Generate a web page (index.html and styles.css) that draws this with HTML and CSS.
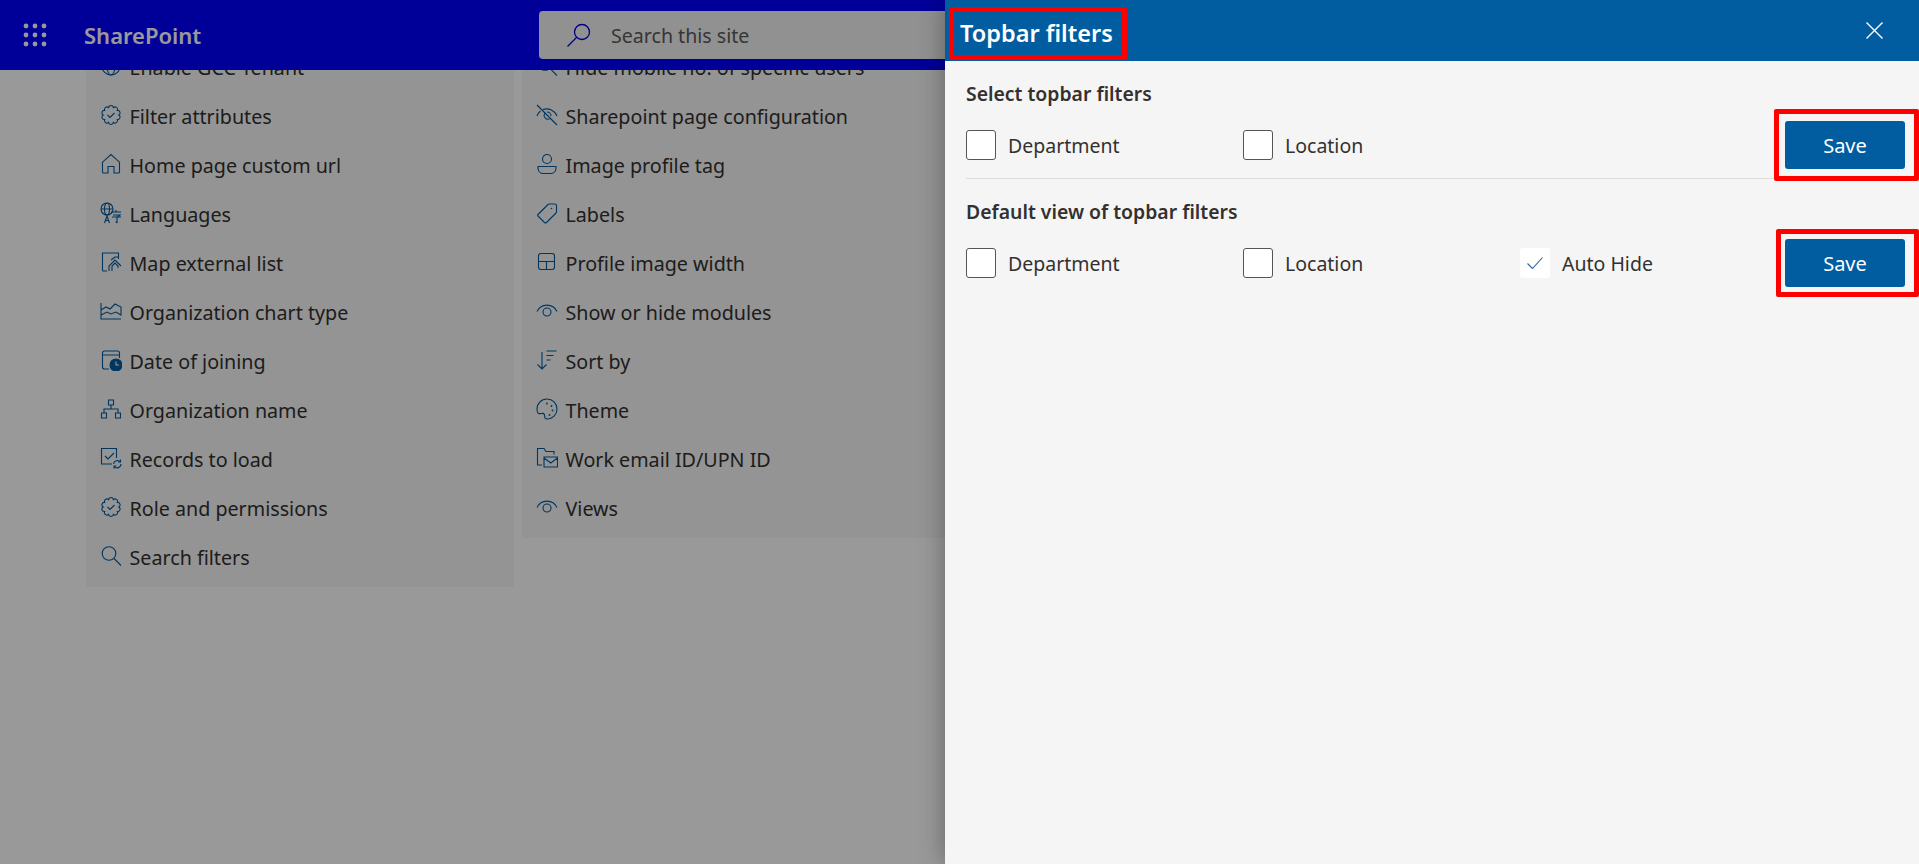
FILE: index.html
```html
<!DOCTYPE html>
<html lang="en">
  <head>
    <meta charset="UTF-8" />
    <meta name="viewport" content="width=device-width, initial-scale=1.0" />
    <title>Topbar filters</title>
    <link rel="stylesheet" href="styles.css">
  </head>
  <body>
    <header class="topbar">
      <svg class="waffle" width="24" height="24" viewBox="0 0 24 24">
        <circle cx="3" cy="3" r="2.4"/><circle cx="12" cy="3" r="2.4"/><circle cx="21" cy="3" r="2.4"/>
        <circle cx="3" cy="12" r="2.4"/><circle cx="12" cy="12" r="2.4"/><circle cx="21" cy="12" r="2.4"/>
        <circle cx="3" cy="21" r="2.4"/><circle cx="12" cy="21" r="2.4"/><circle cx="21" cy="21" r="2.4"/>
      </svg>
      <span class="brand">SharePoint</span>
      <div class="search">
        <svg width="26" height="26" viewBox="0 0 26 26" fill="none" stroke="#0000e0" stroke-width="1.3">
          <circle cx="16" cy="10" r="7.5"/><path d="M10.5 15.5 1.5 24.5"/>
        </svg>
        <span>Search this site</span>
      </div>
    </header>

    <main class="settings">
      <ul class="card">
        <li><svg class="ico" viewBox="0 0 22 22"><circle cx="11" cy="11" r="9"/><ellipse cx="11" cy="11" rx="4" ry="9"/><path d="M2 11h18"/></svg>Enable GCC Tenant</li>
        <li><svg class="ico" viewBox="0 0 22 22"><path d="M18.8 11A2.45 2.45 0 0 1 17.31 15.58 2.45 2.45 0 0 1 13.41 18.42 2.45 2.45 0 0 1 8.59 18.42 2.45 2.45 0 0 1 4.69 15.58 2.45 2.45 0 0 1 3.2 11 2.45 2.45 0 0 1 4.69 6.42 2.45 2.45 0 0 1 8.59 3.58 2.45 2.45 0 0 1 13.41 3.58 2.45 2.45 0 0 1 17.31 6.42 2.45 2.45 0 0 1 18.8 11z"/><path d="M7.500 11l2.500 2.500 4.500-4.500"/></svg>Filter attributes</li>
        <li><svg class="ico" viewBox="0 0 22 22"><path d="M2.5 19V9.2L11 1.5l8.500 7.700V19a1 1 0 0 1-1 1H14v-6.500H8V20H3.500a1 1 0 0 1-1-1z"/></svg>Home page custom url</li>
        <li><svg class="ico" viewBox="0 0 22 22"><circle cx="7" cy="7" r="6"/><ellipse cx="7" cy="7" rx="2.500" ry="6"/><path d="M1 7h12M11 10h10M16 8v2M13 13h7l-3 2.500M12 15h9M17 15.500v5l-1.500-.5"/><path d="M4.500 21l2.500-7 2.500 7M5.500 18.500h3"/></svg>Languages</li>
        <li><svg class="ico" viewBox="0 0 22 22"><path d="M7 20H3.500a1 1 0 0 1-1-1V2h16v6"/><path d="M9 20v-5l6-6 6 6M12 20v-5l3-3 3 3v2M15 6l-4 3M19 6h-4"/></svg>Map external list</li>
        <li><svg class="ico" viewBox="0 0 22 22"><path d="M1 3v16h20M1 10l5-3 4 2 5-5 6 3v8l-5-3-5 2-4-2-6 3"/></svg>Organization chart type</li>
        <li><svg class="ico" viewBox="0 0 22 22"><path d="M9 20H4.500a2 2 0 0 1-2-2V4a2 2 0 0 1 2-2h13a2 2 0 0 1 2 2v5M2.500 6h17"/><circle class="solid" cx="16" cy="16" r="6"/><path class="cut" d="M16 12.500V16h3"/></svg>Date of joining</li>
        <li><svg class="ico" viewBox="0 0 22 22"><path d="M8.500 2h5v5h-5zM1.500 15h5v5h-5zM15.500 15h5v5h-5zM11 7v4M4 15v-4h14v4"/></svg>Organization name</li>
        <li><svg class="ico" viewBox="0 0 22 22"><path d="M12 17H1.500V1.500h15V11M5 9l3 3 6-6"/><path d="M13.500 17a4 4 0 0 1 7-2M21 17a4 4 0 0 1-7 2.500M20.500 12.500V15h-2.500M14 21.500V19h2.500"/></svg>Records to load</li>
        <li><svg class="ico" viewBox="0 0 22 22"><path d="M18.8 11A2.45 2.45 0 0 1 17.31 15.58 2.45 2.45 0 0 1 13.41 18.42 2.45 2.45 0 0 1 8.59 18.42 2.45 2.45 0 0 1 4.69 15.58 2.45 2.45 0 0 1 3.2 11 2.45 2.45 0 0 1 4.69 6.42 2.45 2.45 0 0 1 8.59 3.58 2.45 2.45 0 0 1 13.41 3.58 2.45 2.45 0 0 1 17.31 6.42 2.45 2.45 0 0 1 18.8 11z"/><path d="M7.500 11l2.500 2.500 4.500-4.500"/></svg>Role and permissions</li>
        <li><svg class="ico" viewBox="0 0 22 22"><circle cx="9" cy="8.500" r="6.800"/><path d="M14 13.500l7 7"/></svg>Search filters</li>
      </ul>
      <ul class="card">
        <li><svg class="ico" viewBox="0 0 22 22"><circle cx="9" cy="8.500" r="6.800"/><path d="M14 13.500l7 7"/></svg>Hide mobile no. of specific users</li>
        <li><svg class="ico" viewBox="0 0 22 22"><path d="M1 1l20 20M4.500 7A12 12 0 0 0 1 12M21 12A11 11 0 0 0 7 5.500M8.500 9.500a4 4 0 0 0 5 5.500M11 8a4 4 0 0 1 4 4"/></svg>Sharepoint page configuration</li>
        <li><svg class="ico" viewBox="0 0 22 22"><circle cx="11" cy="6" r="4.500"/><path d="M2 13.500h18v2a5.500 5.500 0 0 1-5.500 5h-7A5.500 5.500 0 0 1 2 15.500z"/></svg>Image profile tag</li>
        <li><svg class="ico" viewBox="0 0 22 22"><path d="M2 12.500 12 2.500a1.500 1.500 0 0 1 1-.5h6a1.500 1.500 0 0 1 1.500 1.500V10a1.500 1.500 0 0 1-.5 1L10.500 20.500a1.500 1.500 0 0 1-2 0L2 14a1 1 0 0 1 0-1.500z"/><circle class="dot" cx="15.500" cy="6.500" r=".8"/></svg>Labels</li>
        <li><svg class="ico" viewBox="0 0 22 22"><rect x="2.500" y="2.500" width="16" height="16" rx="2.500"/><path d="M2.500 10.500h16M10.500 10.500v8"/></svg>Profile image width</li>
        <li><svg class="ico" viewBox="0 0 22 22"><path d="M1 11.500a11 11 0 0 1 20 0"/><circle cx="11" cy="12" r="4"/></svg>Show or hide modules</li>
        <li><svg class="ico" viewBox="0 0 22 22"><path d="M6 3v17M1.500 15.500 6 20l4.500-4.500M10.500 2h10M10.500 6.500h7M10.500 11h4"/></svg>Sort by</li>
        <li><svg class="ico" viewBox="0 0 22 22"><path d="M11 1a10 10 0 0 1 0 20c-3 0-2-2-2.500-4s-1.500-2-3.500-1.500-4 0-4-4A10 10 0 0 1 11 1z"/><circle class="dot" cx="11" cy="5.500" r=".9"/><circle class="dot" cx="15.500" cy="8" r=".9"/><circle class="dot" cx="16.500" cy="12.500" r=".9"/><circle class="dot" cx="13.500" cy="17" r=".9"/></svg>Theme</li>
        <li><svg class="ico" viewBox="0 0 22 22"><path d="M6 18H1.500V1.500H8l2 3h8v3"/><path d="M8 10h13.500v10H8zM8 11l6.750 5 6.750-5"/></svg>Work email ID/UPN ID</li>
        <li><svg class="ico" viewBox="0 0 22 22"><path d="M1 11.500a11 11 0 0 1 20 0"/><circle cx="11" cy="12" r="4"/></svg>Views</li>
      </ul>
    </main>

    <div class="overlay"></div>

    <aside class="panel">
      <div class="panel-head">
        <h1 class="panel-title">Topbar filters</h1>
        <svg class="close" width="17" height="17" viewBox="0 0 17 17" fill="none" stroke="#fff" stroke-width="1.4">
          <path d="M.5.500l16 16M16.500.500l-16 16"/>
        </svg>
      </div>

      <section class="block">
        <h2>Select topbar filters</h2>
        <div class="row">
          <div class="option"><span class="box"></span><span class="label">Department</span></div>
          <div class="option"><span class="box"></span><span class="label">Location</span></div>
          <button class="save frame-a">Save</button>
        </div>
      </section>

      <section class="block last">
        <h2>Default view of topbar filters</h2>
        <div class="row">
          <div class="option"><span class="box"></span><span class="label">Department</span></div>
          <div class="option"><span class="box"></span><span class="label">Location</span></div>
          <div class="option tight">
            <span class="box checked">
              <svg width="16" height="12" viewBox="0 0 16 12" fill="none" stroke="#2a62a0" stroke-width="1.1"><path d="M.5 6.500 5.500 11.500 15.500.500"/></svg>
            </span>
            <span class="label">Auto Hide</span>
          </div>
          <button class="save frame-b">Save</button>
        </div>
      </section>
    </aside>
  </body>
</html>
```

FILE: styles.css
```css
* {
  margin: 0;
  padding: 0;
  box-sizing: border-box;
}
body {
  height: 100vh;
  overflow: hidden;
  position: relative;
  background: #fff;
  color: #323130;
  font-family: "Noto Sans", "Liberation Sans", sans-serif;
}

/* top bar */
.topbar {
  height: 70px;
  background: #0000ff;
  display: flex;
  align-items: center;
  padding-left: 23px;
}
.waffle {
  fill: #fff;
}
.brand {
  margin-left: 37px;
  width: 455px;
  color: #fff;
  font-size: 22px;
  font-weight: 600;
}
.search {
  width: 600px;
  height: 48px;
  background: #f2f2f2;
  border-radius: 4px;
  display: flex;
  align-items: center;
  padding-left: 27px;
  gap: 19px;
  font-size: 19.6px;
  color: #5a5a5a;
}

/* settings list behind the panel */
.settings {
  height: calc(100vh - 70px);
  overflow: hidden;
  display: flex;
  gap: 8px;
  padding-left: 86px;
}
.card {
  width: 428px;
  align-self: flex-start;
  margin-top: -27px;
  padding-bottom: 5px;
  background: #f7f7f7;
  list-style: none;
}
.card li {
  height: 49px;
  display: flex;
  align-items: center;
  padding-left: 14px;
  gap: 7.5px;
  font-size: 19.7px;
  white-space: nowrap;
}
.ico {
  width: 22px;
  height: 22px;
  margin-bottom: 4px;
  flex: none;
  fill: none;
  stroke: #005a9e;
  stroke-width: 1.1;
}
.ico .solid {
  fill: #005a9e;
}
.ico .cut {
  stroke: #fff;
}
.ico .dot {
  fill: #005a9e;
  stroke: none;
}

.overlay {
  position: absolute;
  inset: 0;
  background: rgba(0, 0, 0, 0.4);
}

/* side panel */
.panel {
  position: absolute;
  top: 0;
  right: 0;
  bottom: 0;
  width: 974px;
  background: #f5f5f5;
  box-shadow: 0 0 24px rgba(0, 0, 0, 0.35);
}
.panel-head {
  height: 61px;
  background: #015ca0;
  display: flex;
  align-items: flex-end;
  justify-content: space-between;
  padding: 0 36px 1px 4px;
}
.panel-title {
  height: 53px;
  width: 178px;
  border: 5px solid #f00;
  border-radius: 2px;
  padding-left: 6px;
  color: #fff;
  font-size: 23.5px;
  line-height: 42px;
  font-weight: 600;
  white-space: nowrap;
}
.close {
  margin-bottom: 21px;
}
.block {
  margin-left: 21px;
  padding: 17px 14px 9px 0;
  border-bottom: 1px solid #ddd;
}
.block.last {
  border-bottom: 0;
}
.block h2 {
  font-size: 19.4px;
  line-height: 32px;
  font-weight: 600;
}
.row {
  margin-top: 11px;
  display: flex;
  align-items: center;
}
.option {
  flex: none;
  width: 277px;
  display: flex;
  align-items: center;
  gap: 12px;
  font-size: 19.5px;
}
.option.tight {
  width: auto;
}
.label {
  margin-top: 1px;
}
.box {
  width: 30px;
  height: 30px;
  background: #fff;
  border: 1px solid #555;
  border-radius: 3px;
  display: flex;
  align-items: center;
  justify-content: center;
}
.box.checked {
  border: 0;
}
.save {
  flex: none;
  width: 120px;
  height: 48px;
  margin-left: auto;
  position: relative;
  background: #015ca0;
  border: 0;
  border-radius: 3px;
  color: #fff;
  font-family: inherit;
  font-size: 20px;
}
/* red callouts around the save buttons */
.save::after {
  content: "";
  position: absolute;
  border: 5px solid #f00;
  border-radius: 2px;
}
.frame-a::after {
  inset: -12px -14px -12px -11px;
}
.frame-b::after {
  inset: -10px -14px -10px -9px;
}
```
